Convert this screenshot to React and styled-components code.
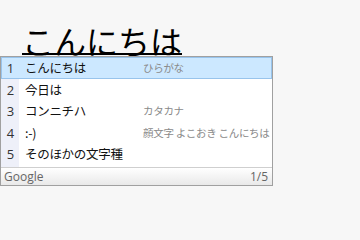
import React from "react";
import styled, { createGlobalStyle } from "styled-components";

const Global = createGlobalStyle`
  html, body { margin: 0; padding: 0; background: #f7f7f7; }
  body { font-family: "Noto Sans", "Noto Sans CJK JP", sans-serif; }
`;

const Page = styled.div`
  width: 360px;
  height: 240px;
  background: #f7f7f7;
  padding-top: 24px;
  box-sizing: border-box;
`;

const Composition = styled.div`
  padding-left: 22px;
  height: 32px;
  font-family: "Noto Sans CJK JP", sans-serif;
  font-size: 32px;
  line-height: 32px;
  color: #000;
`;

const Underlined = styled.span`
  display: inline-block;
  height: 32px;
  position: relative;
  &::after {
    content: "";
    position: absolute;
    left: 0;
    right: 0;
    bottom: 1px;
    height: 2px;
    background: #000;
  }
`;

const Popup = styled.div`
  width: 273px;
  box-sizing: border-box;
  border: 1px solid #a0a0a0;
  background: #fff;
  display: flex;
  flex-direction: column;
`;

const List = styled.div`
  display: flex;
  flex-direction: column;
  padding-bottom: 2px;
  background: linear-gradient(to right, #eef0f9 0, #eef0f9 18px, #fff 18px);
`;

const Row = styled.div`
  display: flex;
  align-items: center;
  height: ${(p) => (p.$selected ? "22px" : "21.5px")};
  box-sizing: border-box;
  border: 1px solid ${(p) => (p.$selected ? "#98c4ec" : "transparent")};
  background: ${(p) => (p.$selected ? "#cce8ff" : "transparent")};
`;

const Num = styled.span`
  width: 17px;
  text-align: center;
  font-family: "Open Sans", sans-serif;
  font-size: 13px;
  line-height: 16px;
  color: #333;
`;

const Cand = styled.span`
  width: 118px;
  padding-left: 6px;
  font-family: "Noto Sans CJK JP", sans-serif;
  font-size: 12.5px;
  line-height: 16px;
  color: #111;
  white-space: nowrap;
  letter-spacing: -0.3px;
`;

const Note = styled.span`
  font-family: "Noto Sans CJK JP", sans-serif;
  font-size: 10.5px;
  line-height: 14px;
  color: #8a8a8a;
  white-space: nowrap;
  letter-spacing: -0.3px;
`;

const Footer = styled.div`
  height: 17px;
  border-top: 1px solid #cfcfcf;
  background: linear-gradient(to bottom, #ffffff, #e9e9e9);
  display: flex;
  align-items: center;
  justify-content: space-between;
  padding: 0 4px 0 3px;
  font-family: "Open Sans", sans-serif;
  font-size: 12px;
  line-height: 15px;
  color: #666;
`;

const items = [
  { n: 1, c: "こんにちは", a: "ひらがな" },
  { n: 2, c: "今日は", a: "" },
  { n: 3, c: "コンニチハ", a: "カタカナ" },
  { n: 4, c: ":-)", a: "顔文字 よこおき こんにちは" },
  { n: 5, c: "そのほかの文字種", a: "" },
];

export default function App() {
  return (
    <>
      <Global />
      <Page>
        <Composition>
          <Underlined>こんにちは</Underlined>
        </Composition>
        <Popup>
          <List>
            {items.map((it) => (
              <Row key={it.n} $selected={it.n === 1}>
                <Num>{it.n}</Num>
                <Cand>{it.c}</Cand>
                <Note>{it.a}</Note>
              </Row>
            ))}
          </List>
          <Footer>
            <span>Google</span>
            <span>1/5</span>
          </Footer>
        </Popup>
      </Page>
    </>
  );
}
